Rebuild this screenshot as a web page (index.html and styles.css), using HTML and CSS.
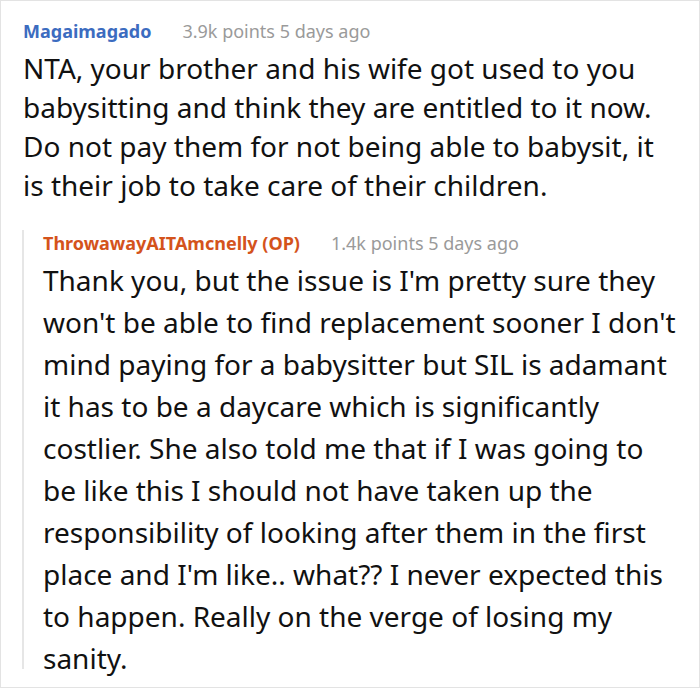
FILE: index.html
```html
<!DOCTYPE html>
<html>
<head>
<meta charset="utf-8">
<link rel="stylesheet" href="styles.css">
</head>
<body>
<div class="frame">
  <div class="comment">
    <div class="meta"><span class="user user-blue">Magaimagado</span><span class="info">3.9k points 5 days ago</span></div>
    <p class="text">NTA, your brother and his wife got used to you babysitting and think they are entitled to it now. Do not pay them for not being able to babysit, it is their job to take care of their children.</p>
    <div class="reply">
      <div class="meta"><span class="user user-orange">ThrowawayAITAmcnelly (OP)</span><span class="info">1.4k points 5 days ago</span></div>
      <p class="text text-reply">Thank you, but the issue is I'm pretty sure they won't be able to find replacement sooner I don't mind paying for a babysitter but SIL is adamant it has to be a daycare which is significantly costlier. She also told me that if I was going to be like this I should not have taken up the responsibility of looking after them in the first place and I'm like.. what?? I never expected this to happen. Really on the verge of losing my sanity.</p>
    </div>
  </div>
</div>
</body>
</html>
```

FILE: styles.css
```css
html, body {
  margin: 0;
  padding: 0;
  background: #ffffff;
}
.frame {
  width: 700px;
  height: 688px;
  box-sizing: border-box;
  border: 1px solid #e3e3e3;
  font-family: "Noto Sans", sans-serif;
  color: #111111;
  overflow: hidden;
}
.comment {
  padding: 17px 20px 0 22px;
}
.meta {
  display: flex;
  align-items: baseline;
  gap: 31px;
  line-height: 26px;
}
.user {
  font-weight: 700;
  font-size: 18px;
}
.user-blue { color: #3c6cc0; }
.user-orange { color: #d4531c; }
.info {
  font-size: 18px;
  color: #9a9a9a;
}
.text {
  margin: 5px 0 0 0;
  font-size: 28px;
  line-height: 39px;
}
.reply {
  display: flow-root;
  margin-top: 25px;
  margin-left: -1px;
  border-left: 2px solid #e6e6e6;
  padding-left: 19px;
}
.text-reply {
  margin-top: 3px;
  margin-bottom: -10px;
  line-height: 42px;
}
```
